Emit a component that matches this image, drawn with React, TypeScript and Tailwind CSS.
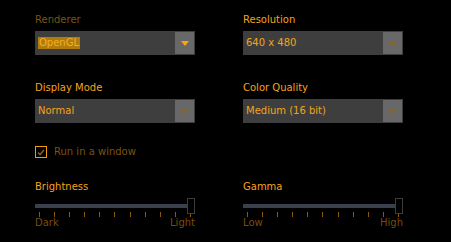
function Arrow({ dim }: { dim?: boolean }) {
  return (
    <svg width="8" height="5" viewBox="0 0 8 5" className="block">
      <path d="M0 0H8L4 5Z" fill={dim ? "#8a6420" : "#ffa500"} />
    </svg>
  );
}

function Select({ value, selected, dimArrow }: { value: string; selected?: boolean; dimArrow?: boolean }) {
  return (
    <div className="flex h-[24px] w-[160px] items-stretch bg-[#3e3e3e] py-[1px] pr-[1px]">
      <div className="flex flex-1 items-center pl-[3px]">
        {selected ? (
          <span className="bg-[#b07d0c] px-[1px] leading-[12px] text-[#f4ad22]">{value}</span>
        ) : (
          <span className="leading-[12px] text-[#f4a41c]">{value}</span>
        )}
      </div>
      <div className="flex w-[19px] items-center justify-center bg-[#686868]">
        <Arrow dim={dimArrow} />
      </div>
    </div>
  );
}

function Field({ label, value, dimLabel, selected, dimArrow }: { label: string; value: string; dimLabel?: boolean; selected?: boolean; dimArrow?: boolean }) {
  return (
    <div className="flex w-[160px] flex-col gap-[5px]">
      <div className={dimLabel ? "text-[#7a5410]" : "text-[#f5a31c]"}>{label}</div>
      <Select value={value} selected={selected} dimArrow={dimArrow} />
    </div>
  );
}

function Slider({ label, low, high }: { label: string; low: string; high: string }) {
  const ticks = Array.from({ length: 11 });
  return (
    <div className="flex w-[160px] flex-col">
      <div className="text-[#f5a31c]">{label}</div>
      <div className="relative mt-[5px] h-[16px] w-[160px]">
        <div className="absolute left-0 right-0 top-[6px] h-[4px] bg-[#3a404e]" />
        <div className="absolute right-0 top-0 h-[16px] w-[8px] border border-[#3c3c3c] bg-black" />
      </div>
      <div className="mt-[-2px] flex h-[5px] justify-between px-[4px]">
        {ticks.map((_, i) => (
          <div key={i} className="h-[5px] w-[1px] bg-[#8a5a10]" />
        ))}
      </div>
      <div className="flex justify-between text-[#7a4c0a]">
        <span>{low}</span>
        <span>{high}</span>
      </div>
    </div>
  );
}

export default function App() {
  return (
    <main className="h-[242px] w-[451px] overflow-hidden bg-black pl-[35px] pt-[14px] font-['DejaVu_Sans',sans-serif] text-[10px] leading-[12px]">
      <div className="flex gap-[48px]">
        <Field label="Renderer" value="OpenGL" dimLabel selected />
        <Field label="Resolution" value="640 x 480" dimArrow />
      </div>

      <div className="mt-[27px] flex gap-[48px]">
        <Field label="Display Mode" value="Normal" dimArrow />
        <Field label="Color Quality" value="Medium (16 bit)" dimArrow />
      </div>

      <div className="mt-[23px] flex items-center gap-[7px]">
        <div className="flex h-[12px] w-[12px] items-center justify-center border border-[#f59a10]">
          <svg width="8" height="7" viewBox="0 0 8 7">
            <path d="M1 3.5L3 5.5L7 1" fill="none" stroke="#8a5c12" strokeWidth="1.6" />
          </svg>
        </div>
        <span className="text-[#7a5410]">Run in a window</span>
      </div>

      <div className="mt-[23px] flex gap-[48px]">
        <Slider label="Brightness" low="Dark" high="Light" />
        <Slider label="Gamma" low="Low" high="High" />
      </div>
    </main>
  );
}
